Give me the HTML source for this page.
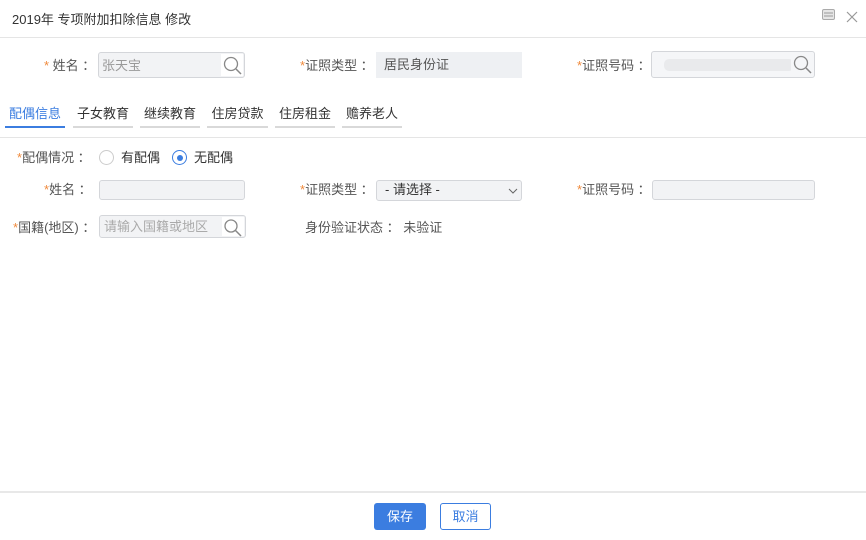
<!DOCTYPE html>
<html><head><meta charset="utf-8"><style>
*{margin:0;padding:0;box-sizing:border-box}
body{width:866px;height:540px;background:#fff;position:relative;overflow:hidden;font-family:"Liberation Sans","Noto Sans CJK SC",sans-serif;font-size:13px;color:#333;line-height:16px}
.a{position:absolute;white-space:nowrap}
.lbl{color:#555;line-height:16px}
.st{color:#f08a3c}
.inp{position:absolute;border:1px solid #d4d6da;border-radius:3px;background:#f2f3f5}
.ico{position:absolute;right:1px;top:1px;bottom:1px;width:22px;background:#fff}
.tab{position:absolute;top:105px;height:23px;border-bottom:2px solid #d9d9d9;text-align:center;line-height:18px;color:#333}
</style></head><body>
<div class="a" style="left:12px;top:12px;font-size:13px;color:#333">2019年 专项附加扣除信息 修改</div>
<svg class="a" style="left:822px;top:9px" width="14" height="12"><rect x="0.5" y="0.5" width="12" height="10" rx="1.5" fill="#e6e6e6" stroke="#aaa"/><line x1="2" y1="4" x2="11" y2="4" stroke="#999"/><line x1="2" y1="7" x2="11" y2="7" stroke="#999"/></svg>
<svg class="a" style="left:846px;top:11px" width="12" height="12"><path d="M1 1L11 11M11 1L1 11" stroke="#999" stroke-width="1.2"/></svg>
<div class="a" style="left:0;top:37px;width:866px;height:1px;background:#e5e5e5"></div>

<div class="a lbl" style="left:44px;top:58px"><span class="st">*</span> 姓名 ：</div>
<div class="inp" style="left:98px;top:52px;width:147px;height:26px"><span class="a" style="left:3px;top:1px;line-height:24px;color:#999">张天宝</span><div class="ico"><svg width="22" height="24"><circle cx="10" cy="10" r="6.5" fill="none" stroke="#888" stroke-width="1.3"/><line x1="15" y1="15" x2="20" y2="20" stroke="#888" stroke-width="1.5"/></svg></div></div>
<div class="a lbl" style="left:300px;top:58px"><span class="st">*</span>证照类型 ：</div>
<div class="a" style="left:376px;top:52px;width:146px;height:26px;background:#eef0f3;padding:0 8px;line-height:26px;color:#555">居民身份证</div>
<div class="a lbl" style="left:577px;top:58px"><span class="st">*</span>证照号码 ：</div>
<div class="inp" style="left:651px;top:51px;width:164px;height:27px;background:#f5f6f8"><div class="a" style="left:12px;top:7px;width:130px;height:12px;background:#e9eaec;border-radius:5px"></div><div class="ico" style="background:#f5f6f8"><svg width="22" height="24"><circle cx="10" cy="10" r="6.5" fill="none" stroke="#888" stroke-width="1.3"/><line x1="15" y1="15" x2="20" y2="20" stroke="#888" stroke-width="1.5"/></svg></div></div>

<div class="tab" style="left:5px;width:60px;border-color:#3b7de0;color:#3b7de0">配偶信息</div>
<div class="tab" style="left:73px;width:60px">子女教育</div>
<div class="tab" style="left:140px;width:60px">继续教育</div>
<div class="tab" style="left:207px;width:61px">住房贷款</div>
<div class="tab" style="left:275px;width:60px">住房租金</div>
<div class="tab" style="left:342px;width:60px">赡养老人</div>
<div class="a" style="left:0;top:137px;width:866px;height:1px;background:#e5e5e5"></div>

<div class="a lbl" style="left:17px;top:150px"><span class="st">*</span>配偶情况 ：</div>
<div class="a" style="left:99px;top:150px;width:15px;height:15px;border:1px solid #ccc;border-radius:50%"></div>
<div class="a" style="left:121px;top:150px;color:#333">有配偶</div>
<div class="a" style="left:172px;top:150px;width:15px;height:15px;border:1px solid #3b7de0;border-radius:50%"><div style="margin:3.5px;width:6px;height:6px;border-radius:50%;background:#3b7de0"></div></div>
<div class="a" style="left:194px;top:150px;color:#333">无配偶</div>

<div class="a lbl" style="left:44px;top:182px"><span class="st">*</span>姓名 ：</div>
<div class="inp" style="left:99px;top:180px;width:146px;height:20px"></div>
<div class="a lbl" style="left:300px;top:182px"><span class="st">*</span>证照类型 ：</div>
<div class="inp" style="left:376px;top:180px;width:146px;height:21px"><span class="a" style="left:8px;top:0;line-height:18px;color:#333">- 请选择 -</span><svg class="a" style="left:131px;top:6px" width="10" height="8"><path d="M1 2L5 6L9 2" fill="none" stroke="#666"/></svg></div>
<div class="a lbl" style="left:577px;top:182px"><span class="st">*</span>证照号码 ：</div>
<div class="inp" style="left:652px;top:180px;width:163px;height:20px"></div>

<div class="a lbl" style="left:13px;top:220px"><span class="st">*</span>国籍(地区) ：</div>
<div class="inp" style="left:99px;top:215px;width:147px;height:23px"><span class="a" style="left:4px;top:0;line-height:21px;color:#aaa">请输入国籍或地区</span><div class="ico"><svg width="22" height="21"><circle cx="9" cy="9" r="6" fill="none" stroke="#888" stroke-width="1.3"/><line x1="13.5" y1="13.5" x2="19" y2="19" stroke="#888" stroke-width="1.5"/></svg></div></div>
<div class="a" style="left:305px;top:220px;color:#555">身份验证状态 ： 未验证</div>

<div class="a" style="left:0;top:491px;width:866px;height:2px;background:#e8e8e8"></div>
<div class="a" style="left:374px;top:503px;width:52px;height:27px;background:#3b7de0;border-radius:3px;color:#fff;text-align:center;line-height:27px">保存</div>
<div class="a" style="left:440px;top:503px;width:51px;height:27px;border:1px solid #3b7de0;border-radius:3px;color:#3b7de0;text-align:center;line-height:25px">取消</div>
</body></html>
